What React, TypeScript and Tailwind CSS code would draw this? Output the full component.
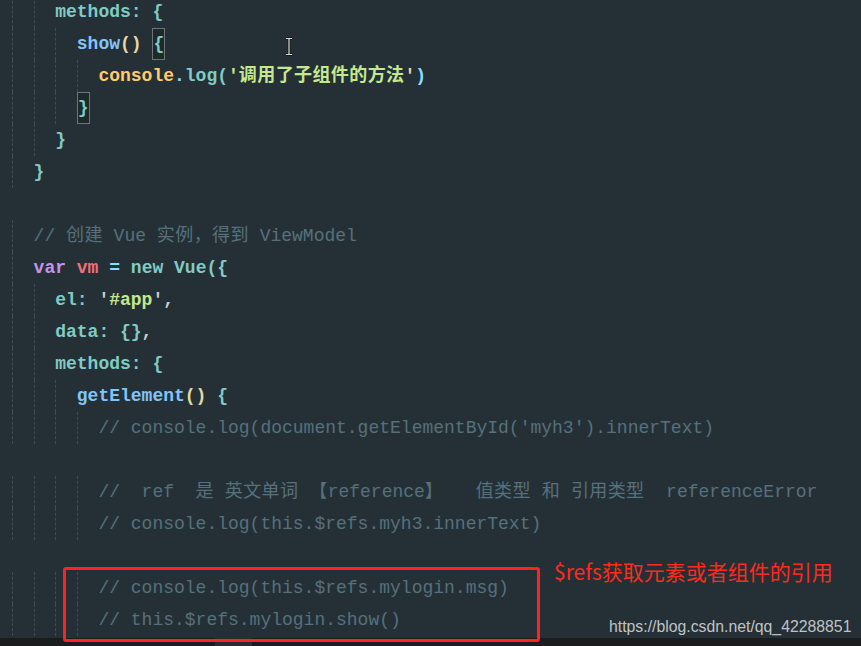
import React from "react";

type Tok = { t: string; c: string; box?: boolean; thin?: boolean };

const TEAL = "text-[#80cbc4]";
const BLUE = "text-[#82c4f8]";
const CREAM = "text-[#e6d8a0]";
const ORANGE = "text-[#ffcb6b]";
const CYAN = "text-[#89ddff]";
const GREEN = "text-[#c3e88d]";
const PURPLE = "text-[#c792ea]";
const RED = "text-[#f07178]";
const WHITE = "text-[#c9d1d4]";
const COMMENT = "text-[#56707c]";

type Line = { level: number; hot?: number; toks: Tok[] };

const cm = (t: string): Tok[] => [{ t, c: COMMENT, thin: true }];

const lines: Line[] = [
  { level: 2, toks: [{ t: "methods: {", c: TEAL }] },
  {
    level: 3,
    toks: [
      { t: "show", c: BLUE },
      { t: "()", c: CREAM },
      { t: " ", c: WHITE },
      { t: "{", c: TEAL, box: true },
    ],
  },
  {
    level: 4,
    hot: 3,
    toks: [
      { t: "console", c: ORANGE },
      { t: ".", c: CYAN },
      { t: "log(", c: TEAL },
      { t: "'调用了子组件的方法", c: GREEN },
      { t: "'", c: CREAM },
      { t: ")", c: CYAN },
    ],
  },
  { level: 3, toks: [{ t: "}", c: TEAL, box: true }] },
  { level: 2, toks: [{ t: "}", c: TEAL }] },
  { level: 1, toks: [{ t: "}", c: TEAL }] },
  { level: 0, toks: [] },
  { level: 1, toks: cm("// 创建 Vue 实例，得到 ViewModel") },
  {
    level: 1,
    toks: [
      { t: "var", c: PURPLE },
      { t: " ", c: WHITE },
      { t: "vm", c: RED },
      { t: " = ", c: CYAN },
      { t: "new Vue({", c: TEAL },
    ],
  },
  {
    level: 2,
    toks: [
      { t: "el: ", c: TEAL },
      { t: "'", c: WHITE },
      { t: "#app", c: GREEN },
      { t: "',", c: WHITE },
    ],
  },
  {
    level: 2,
    toks: [
      { t: "data: {}", c: TEAL },
      { t: ",", c: WHITE },
    ],
  },
  { level: 2, toks: [{ t: "methods: {", c: TEAL }] },
  {
    level: 3,
    toks: [
      { t: "getElement", c: BLUE },
      { t: "()", c: CREAM },
      { t: " {", c: TEAL },
    ],
  },
  { level: 4, toks: cm("// console.log(document.getElementById('myh3').innerText)") },
  { level: 0, toks: [] },
  {
    level: 4,
    toks: cm("//  ref  是 英文单词 【reference】   值类型 和 引用类型  referenceError"),
  },
  { level: 4, toks: cm("// console.log(this.$refs.myh3.innerText)") },
  { level: 0, toks: [] },
  { level: 4, toks: cm("// console.log(this.$refs.mylogin.msg)") },
  { level: 4, toks: cm("// this.$refs.mylogin.show()") },
];

// CJK glyphs in the capture sit a touch wider than one em
function Wide({ text }: { text: string }) {
  const parts = text.split(/([\u3000-\u9fff\uff00-\uffef]+)/);
  return (
    <>
      {parts.map((p, i) =>
        i % 2 === 1 ? (
          <span key={i} className="tracking-[0.4px]">
            {p}
          </span>
        ) : (
          p
        )
      )}
    </>
  );
}

function CodeLine({ line }: { line: Line }) {
  const guides = line.toks.length ? Array.from({ length: line.level }) : [];
  return (
    <div className="flex h-[32px] items-stretch">
      {guides.map((_, k) => (
        <span
          key={k}
          className={
            k === line.hot
              ? "w-[21.6px] shrink-0 border-l border-dashed border-[#5a4441]"
              : "w-[21.6px] shrink-0 border-l border-dashed border-[#3f4c53]"
          }
        />
      ))}
      <span className="whitespace-pre leading-[32px]">
        {line.toks.map((tok, i) =>
          tok.box ? (
            <span
              key={i}
              className={`inline-block h-[32px] border border-[#6c7577] bg-[#1d2a29] align-top font-bold leading-[30px] ${tok.c}`}
            >
              {tok.t}
            </span>
          ) : (
            <span key={i} className={`${tok.thin ? "font-normal" : "font-bold"} ${tok.c}`}>
              <Wide text={tok.t} />
            </span>
          )
        )}
      </span>
    </div>
  );
}

export default function App() {
  return (
    <div className="relative flex h-[646px] w-[861px] flex-col overflow-hidden bg-[#253036]">
      <div
        className="-mt-[4px] pl-[12px] text-[18px]"
        style={{ fontFamily: "'Liberation Mono', 'Noto Sans CJK SC', monospace" }}
      >
        {lines.map((l, i) => (
          <CodeLine key={i} line={l} />
        ))}
      </div>

      {/* bottom player strip */}
      <div className="mt-auto flex h-[8px] bg-[#1b1c1d]">
        <div className="ml-[215px] w-[37px] bg-[#2a2c2e]" />
      </div>

      {/* text cursor */}
      <svg className="absolute left-[284px] top-[37px]" width="10" height="19" viewBox="0 0 10 19">
        <path d="M2 1.5h2.5l0.5 0.8 0.5-0.8H8M5 2.3v14.4M2 17.5h2.5l0.5-0.8 0.5 0.8H8" stroke="#1a1a1a" strokeWidth="3" fill="none" />
        <path d="M2 1.5h2.5l0.5 0.8 0.5-0.8H8M5 2.3v14.4M2 17.5h2.5l0.5-0.8 0.5 0.8H8" stroke="#d8d8d8" strokeWidth="1.2" fill="none" />
      </svg>

      {/* annotation */}
      <div className="absolute left-[63px] top-[567px] h-[75px] w-[477px] rounded-[3px] border-[3px] border-[#ff2222]" />
      <div
        className="absolute left-[554px] top-[557px] text-[21px] leading-[28px] text-[#ff2a1c]"
        style={{ fontFamily: "'Noto Sans CJK SC', sans-serif" }}
      >
        $refs获取元素或者组件的引用
      </div>
      <div
        className="absolute left-[609px] top-[617px] text-[15.8px] leading-[20px] text-[#bfc3c5]"
        style={{ fontFamily: "'Liberation Sans', sans-serif" }}
      >
        https://blog.csdn.net/qq_42288851
      </div>
    </div>
  );
}
